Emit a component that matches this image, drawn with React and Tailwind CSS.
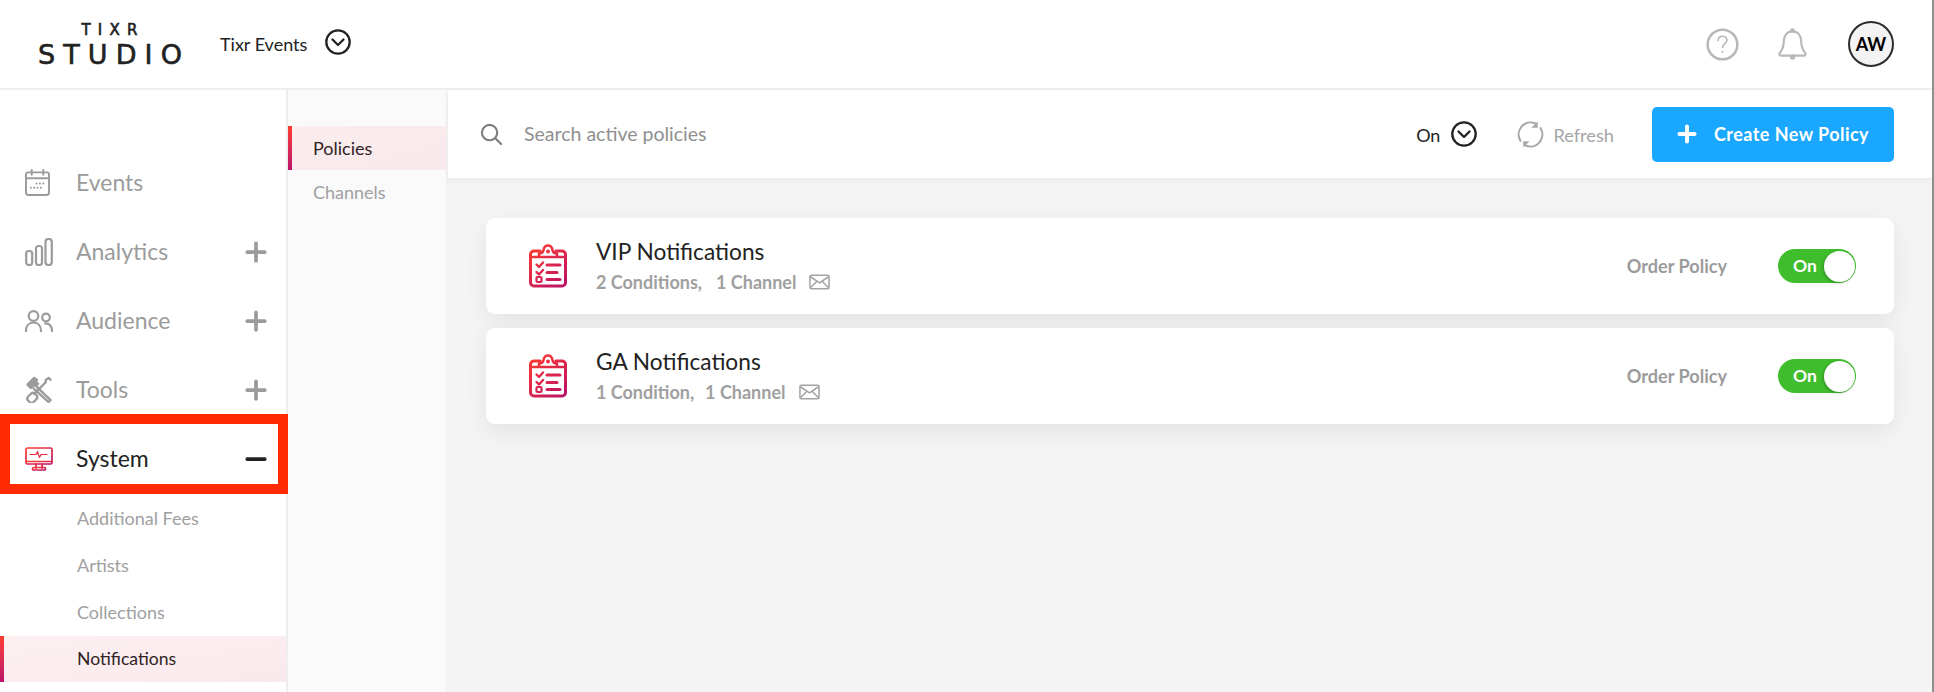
import { Plus, Minus } from 'lucide-react';

const font = { fontFamily: 'Lato, sans-serif' };

function ChevronCircle({ className }) {
  return (
    <svg viewBox="0 0 26 26" className={className} fill="none" stroke="#222" strokeWidth="2.300" strokeLinecap="round" strokeLinejoin="round">
      <circle cx="13" cy="13" r="11.700" />
      <path d="M7.500 10.500 13 16l5.500-5.500" />
    </svg>
  );
}

function Gradient({ id }) {
  return (
    <defs>
      <linearGradient id={id} x1="0" y1="0" x2="1" y2="1">
        <stop offset="0" stopColor="#ff3c2e" />
        <stop offset="1" stopColor="#bb1268" />
      </linearGradient>
    </defs>
  );
}

function ClipboardIcon({ id }) {
  return (
    <svg viewBox="0 0 38 44" className="w-[38px] h-[44px]" fill="none" strokeLinecap="round" strokeLinejoin="round">
      <defs>
        <linearGradient id={id} gradientUnits="userSpaceOnUse" x1="2" y1="2" x2="36" y2="42">
          <stop offset="0" stopColor="#ff3c2e" />
          <stop offset="1" stopColor="#bb1268" />
        </linearGradient>
      </defs>
      <g stroke={`url(#${id})`}>
        <path strokeWidth="3" d="M11 7H5a3.500 3.500 0 0 0-3.500 3.500v28A3.500 3.500 0 0 0 5 42h28a3.500 3.500 0 0 0 3.500-3.500v-28A3.500 3.500 0 0 0 33 7h-6" />
        <path strokeWidth="2.600" d="M4 13h30M10 13V9.500c3 0 4-1 4.500-3.500.5-3 2.500-4.500 4.500-4.500S23 3 23.500 6c.5 2.500 1.500 3.500 4.500 3.500V13" />
        <path strokeWidth="2.400" d="M7.500 20.500l2.500 2.500 4-4.500M7.500 28l2.500 2.500 4-4.500" />
        <rect x="7.500" y="33" width="5" height="5" strokeWidth="2.200" rx="1" />
        <path strokeWidth="3" d="M18 21h13M18 28.500h10M18 35.500h13" />
      </g>
      <circle cx="19" cy="7.500" r="2" fill="#f0303f" />
    </svg>
  );
}

function MailIcon() {
  return (
    <svg viewBox="0 0 22 16" className="w-[21px] h-[16px]" fill="none" stroke="#a3a3a3" strokeWidth="1.600" strokeLinejoin="round">
      <rect x="1" y="1" width="20" height="14" rx="1.500" />
      <path d="M1.500 2.500 11 9l9.500-6.500M1.500 14l6.500-6.500M20.500 14 14 7.500" />
    </svg>
  );
}

function CalendarIcon() {
  return (
    <svg viewBox="0 0 26 28" className="w-[25px] h-[27px]" fill="none" stroke="#9b9b9b" strokeWidth="2" strokeLinecap="round">
      <rect x="1" y="3.500" width="24" height="23.500" rx="2.500" />
      <path d="M1 9.500h24M7 1v5M19 1v5" />
      <path strokeWidth="2" strokeDasharray="0.100 3.400" d="M12 15h8M6 19.500h14" />
    </svg>
  );
}

function BarsIcon() {
  return (
    <svg viewBox="0 0 28 28" className="w-[28px] h-[28px]" fill="none" stroke="#9b9b9b" strokeWidth="2.200">
      <rect x="1.200" y="13" width="6" height="14" rx="2.500" />
      <rect x="11" y="8" width="6" height="19" rx="2.500" />
      <rect x="20.500" y="1" width="6.300" height="26" rx="3" />
    </svg>
  );
}

function PeopleIcon() {
  return (
    <svg viewBox="0 0 28 22" className="w-[28px] h-[22px]" fill="none" stroke="#9b9b9b" strokeWidth="2.200" strokeLinecap="round">
      <circle cx="8.500" cy="6" r="4.800" />
      <path d="M1 21c0-5 3-8.500 7.500-8.500S16 16 16 21" />
      <circle cx="21" cy="7.500" r="3.800" />
      <path d="M20 13.500c4.500-.5 7 3 7 7.500" />
    </svg>
  );
}

function ToolsIcon() {
  return (
    <svg viewBox="0 0 28 28" className="w-[28px] h-[27px]" fill="none" stroke="#9b9b9b" strokeWidth="2.400" strokeLinecap="round" strokeLinejoin="round">
      <path d="M2 9l7-7 3 2-1 2 2 2-2.500 2.500-2-2-2 1.500 1 1-2 1.500z" fill="#9b9b9b" />
      <path d="M11 10.500 26 25l-2 2L8.500 13" />
      <path d="M26 4l-2-2-3 2v2.500L9 18.500" />
      <rect x="-3.500" y="-4.500" width="8" height="10" rx="3" transform="translate(7 22) rotate(45)" />
    </svg>
  );
}

function MonitorIcon() {
  return (
    <svg viewBox="0 0 28 24" className="w-[28px] h-[24px]" fill="none" strokeLinecap="round" strokeLinejoin="round">
      <Gradient id="mon" />
      <g stroke="url(#mon)" strokeWidth="1.700">
        <rect x="1" y="1" width="26" height="16" rx="1.500" />
        <path d="M1 14.500h26M11 17v4M17 17v4" />
        <rect x="7.500" y="20.500" width="13" height="2.500" rx="1" />
      </g>
      <path d="M5 7.500h6l1.500-3 2 6 1.500-3h6" stroke="#ef2c48" strokeWidth="1.200" />
    </svg>
  );
}

function HelpIcon() {
  return (
    <svg viewBox="0 0 34 34" className="w-[33px] h-[33px]" fill="none" stroke="#b8b8b8" strokeWidth="2.600" strokeLinecap="round">
      <circle cx="17" cy="17" r="15.300" />
      <path strokeWidth="1.700" d="M12.500 13c0-3 2-4.500 4.500-4.500s4.500 1.600 4.500 4.200c0 3.500-4.500 3.800-4.500 7.300" />
      <circle cx="17" cy="24.500" r="1.100" fill="#b8b8b8" stroke="none" />
    </svg>
  );
}

function BellIcon() {
  return (
    <svg viewBox="0 0 30 34" className="w-[29px] h-[34px]" fill="none" stroke="#b8b8b8" strokeWidth="2.200" strokeLinejoin="round">
      <path d="M15 4c-5.500 0-9 4-9 10 0 6-1.500 9-4 12-1 1.500-.5 3 1.500 3h23c2 0 2.500-1.500 1.500-3-2.500-3-4-6-4-12 0-6-3.500-10-9-10z" />
      <circle cx="15" cy="3" r="2.400" fill="#b8b8b8" stroke="none" />
      <circle cx="15" cy="30.500" r="2.800" fill="#b8b8b8" stroke="none" />
    </svg>
  );
}

function SearchIcon() {
  return (
    <svg viewBox="0 0 24 24" className="w-[23px] h-[23px]" fill="none" stroke="#7d7d7d" strokeWidth="2.200" strokeLinecap="round">
      <circle cx="10" cy="10" r="8" />
      <path d="M16 16l6 6" />
    </svg>
  );
}

function RefreshIcon() {
  return (
    <svg viewBox="0 0 28 28" className="w-[27px] h-[27px]" fill="none" stroke="#a8a8a8" strokeWidth="2.200" strokeLinecap="round">
      <path d="M3.500 20.500A12.500 12.500 0 0 1 19 2.500" />
      <path d="M24.500 7.500A12.500 12.500 0 0 1 9 25.500" />
      <path d="M21.500 0.500v6.500h-6.500z" fill="#a8a8a8" stroke="none" />
      <path d="M6.500 27.500v-6.500h6.500z" fill="#a8a8a8" stroke="none" />
    </svg>
  );
}

const navItems = [
  { label: 'Events', icon: <CalendarIcon /> },
  { label: 'Analytics', icon: <BarsIcon />, expand: true },
  { label: 'Audience', icon: <PeopleIcon />, expand: true },
  { label: 'Tools', icon: <ToolsIcon />, expand: true },
];

const subItems = ['Additional Fees', 'Artists', 'Collections'];

const policies = [
  { id: 'vip', name: 'VIP Notifications', conditions: '2 Conditions,', channelGap: 'ml-[14px]' },
  { id: 'ga', name: 'GA Notifications', conditions: '1 Condition,', channelGap: 'ml-[11px]' },
];

function PolicyCard({ policy }) {
  return (
    <div className="h-[96px] bg-white rounded-[9px] shadow-[0_8px_24px_rgba(0,0,0,0.07)] flex items-center pl-[43px] pr-[38px]">
      <ClipboardIcon id={`clip-${policy.id}`} />
      <div className="ml-[29px] flex-1">
        <div className="text-[22.700px] leading-[28px] text-[#222] -mt-[2px]">{policy.name}</div>
        <div className="flex items-center text-[18px] leading-[22px] mt-[5px] font-bold text-[#a0a0a0]">
          <span>{policy.conditions}</span>
          <span className={policy.channelGap}>1 Channel</span>
          <span className="ml-[13px] flex"><MailIcon /></span>
        </div>
      </div>
      <span className="text-[18.100px] font-bold text-[#9b9b9b] mt-[1px]">Order Policy</span>
      <div className="ml-[51px] w-[78px] h-[34px] rounded-full bg-[#3fbd2c] flex items-center justify-between pl-[15px] pr-[1px]">
        <span className="text-[17.500px] font-bold text-white">On</span>
        <span className="w-[31px] h-[31px] rounded-full bg-white shadow-[-1px_1px_3px_rgba(0,0,0,0.25)]" />
      </div>
    </div>
  );
}

export default function App() {
  return (
    <div style={font} className="relative w-full h-[692px] overflow-hidden bg-white border-r-2 border-[#8f8f8f] flex flex-col">
      {/* top bar */}
      <header className="h-[90px] shrink-0 border-b-2 border-[#eeeeee] flex items-center pl-[36px] pr-[38px]">
        <div className="w-[148px] mt-[2px] flex flex-col items-center text-[#222] leading-none font-['DejaVu_Sans'] [-webkit-text-stroke:0.6px_#222]">
          <span className="text-[15px] tracking-[0.48em] pl-[6px]">TIXR</span>
          <span className="text-[27px] tracking-[0.3em] mt-[3px] whitespace-nowrap pl-[8px]">STUDIO</span>
        </div>
        <span className="ml-[36px] text-[18px] text-[#222]">Tixr Events</span>
        <ChevronCircle className="ml-[18px] mb-[5px] w-[26px] h-[26px]" />
        <div className="ml-auto flex items-center">
          <HelpIcon />
          <span className="ml-[39px] flex"><BellIcon /></span>
          <div className="ml-[41px] w-[46px] h-[46px] rounded-full border-2 border-[#2b2b2b] bg-[#f3f3f3] flex items-center justify-center text-[18px] font-bold text-black">AW</div>
        </div>
      </header>

      <div className="flex-1 flex min-h-0">
        {/* main nav */}
        <nav className="w-[288px] shrink-0 border-r-2 border-[#eeeeee] pt-[58px]">
          {navItems.map((item) => (
            <div key={item.label} className="h-[69px] flex items-center pl-[25px] pr-[15px]">
              <span className="w-[51px] flex">{item.icon}</span>
              <span className="text-[23px] text-[#9b9b9b] -mt-[1px]">{item.label}</span>
              {item.expand && <Plus className="ml-auto w-[30px] h-[30px] text-[#9b9b9b]" strokeWidth={3} />}
            </div>
          ))}
          <div className="h-[69px] flex items-center pl-[25px] pr-[15px]">
            <span className="w-[51px] flex"><MonitorIcon /></span>
            <span className="text-[23px] text-[#222] -mt-[1px]">System</span>
            <Minus className="ml-auto w-[30px] h-[30px] text-[#222]" strokeWidth={3} />
          </div>
          <div className="mt-[2px]">
            {subItems.map((label) => (
              <div key={label} className="h-[47px] flex items-center pl-[77px] text-[18px] text-[#a0a0a0]">{label}</div>
            ))}
            <div className="relative h-[46px] flex items-center pl-[77px] text-[17.600px] text-[#2f2326] bg-gradient-to-br from-[#fdf0f1] to-[#f8e9ed]">
              <span className="absolute left-0 top-0 bottom-0 w-[4px] bg-gradient-to-b from-[#ff3c2e] to-[#bb1268]" />
              Notifications
            </div>
          </div>
        </nav>

        {/* sub nav */}
        <aside className="w-[160px] shrink-0 bg-[#fafafa] border-r-2 border-[#f3f3f3] pt-[36px]">
          <div className="relative h-[44px] flex items-center pl-[25px] text-[18px] text-[#2f2326] bg-gradient-to-br from-[#fbeced] to-[#f8e9ed]">
            <span className="absolute left-0 top-0 bottom-0 w-[4px] bg-gradient-to-b from-[#ff3c2e] to-[#bb1268]" />
            Policies
          </div>
          <div className="h-[44px] flex items-center pl-[25px] text-[18px] text-[#a0a0a0]">Channels</div>
        </aside>

        {/* content */}
        <main className="flex-1 min-w-0 bg-[#f4f4f4]">
          <div className="h-[88px] bg-white shadow-[0_2px_6px_rgba(0,0,0,0.05)] flex items-center pl-[32px] pr-[38px]">
            <SearchIcon />
            <span className="ml-[21px] text-[19.500px] text-[#8f8f8f]">Search active policies</span>
            <div className="ml-auto flex items-center">
              <span className="text-[18px] text-[#222] mt-[3px]">On</span>
              <ChevronCircle className="ml-[11px] w-[26px] h-[26px]" />
              <span className="ml-[40px] flex"><RefreshIcon /></span>
              <span className="ml-[9px] text-[18.200px] text-[#a5a5a5] mt-[3px]">Refresh</span>
              <button className="ml-[38px] w-[242px] h-[55px] rounded-[5px] bg-[#1aa7ff] flex items-center pl-[22px] text-white font-bold text-[18px]">
                <Plus className="w-[26px] h-[26px]" strokeWidth={3.600} />
                <span className="ml-[14px] tracking-[0.025em]">Create New Policy</span>
              </button>
            </div>
          </div>
          <div className="pt-[40px] pl-[38px] pr-[38px] flex flex-col gap-[14px]">
            {policies.map((p) => (
              <PolicyCard key={p.id} policy={p} />
            ))}
          </div>
        </main>
      </div>

      {/* red annotation box round the System row */}
      <div className="absolute left-0 top-[414px] w-[288px] h-[80px] border-[10px] border-[#ff2a00] pointer-events-none" />
    </div>
  );
}
